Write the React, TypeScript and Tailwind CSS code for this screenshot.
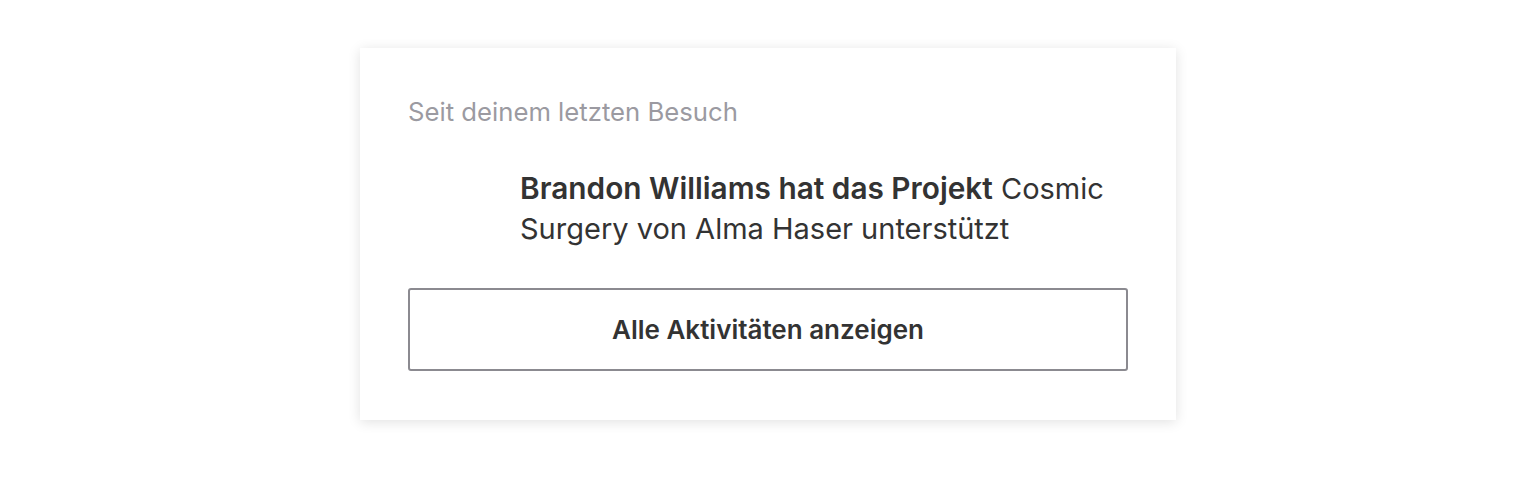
export default function App() {
  return (
    <div className="w-full h-[500px] bg-white flex justify-center pt-[48px]" style={{ fontFamily: 'Inter, "Noto Sans", sans-serif' }}>
      <div className="w-[816px] h-[372px] bg-white shadow-[0_2px_12px_rgba(0,0,0,0.12)] px-[48px] pt-[48px] flex flex-col">
        <div className="text-[25.7px] leading-[32px] text-[#9b9aa1]">Seit deinem letzten Besuch</div>
        <div className="flex mt-[40px]">
          <div className="w-[112px] shrink-0" />
          <p className="text-[29px] leading-[40px] text-[#333333]">
            <span className="font-semibold text-[29.8px] leading-[40px]">Brandon Williams hat das Projekt</span> Cosmic Surgery von Alma Haser unterstützt
          </p>
        </div>
        <button className="mt-[39px] w-[720px] h-[83px] border-2 border-[#8b8a90] rounded-[3px] text-[26px] font-semibold text-[#333333]">
          Alle Aktivitäten anzeigen
        </button>
      </div>
    </div>
  );
}
